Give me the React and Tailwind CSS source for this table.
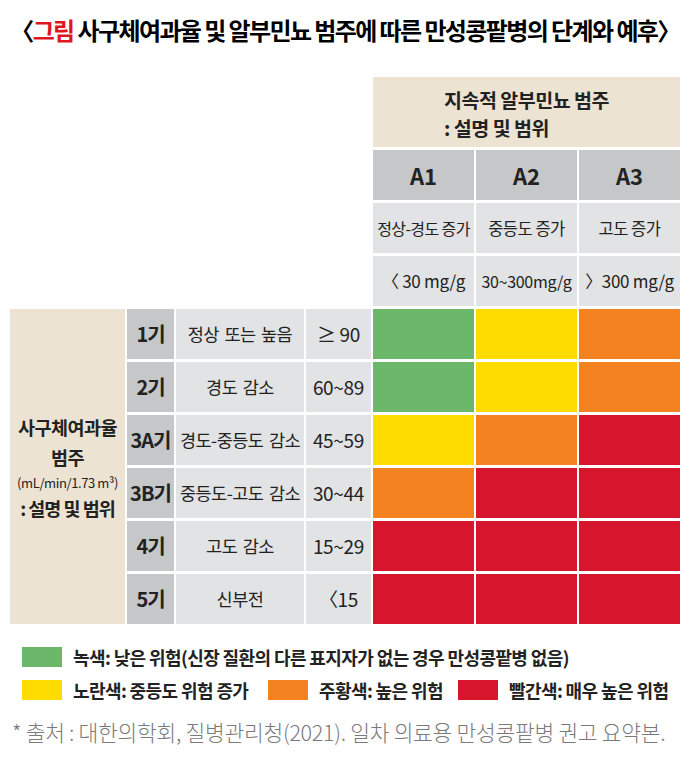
import React from "react";

const G = "bg-[#6cb86a]";
const Y = "bg-[#fedc00]";
const O = "bg-[#f58220]";
const R = "bg-[#d7162e]";

const rows = [
  { stage: "1기", desc: "정상 또는 높음", range: "≥ 90", colors: [G, Y, O] },
  { stage: "2기", desc: "경도 감소", range: "60~89", colors: [G, Y, O] },
  { stage: "3A기", desc: "경도-중등도 감소", range: "45~59", colors: [Y, O, R] },
  { stage: "3B기", desc: "중등도-고도 감소", range: "30~44", colors: [O, R, R] },
  { stage: "4기", desc: "고도 감소", range: "15~29", colors: [R, R, R] },
  { stage: "5기", desc: "신부전", range: "〈15", colors: [R, R, R] },
];

const Legend = ({ color, children }) => (
  <div className="flex items-center h-[20px]">
    <span className={`w-[40px] h-[20px] shrink-0 ${color}`}></span>
    <span className="ml-[11px] text-[18px] font-bold tracking-[-0.6px] text-[#222] whitespace-nowrap leading-[20px]">
      {children}
    </span>
  </div>
);

const App = () => {
  return (
    <div
      className="w-[690px] h-[765px] bg-white text-[#222] overflow-hidden"
      style={{ fontFamily: '"Noto Sans CJK KR", "Noto Sans", sans-serif' }}
    >
      {/* 제목 */}
      <h1 className="pt-[14px] h-[77px] text-center text-[24px] font-bold leading-[32px] tracking-[-1.6px] text-black whitespace-nowrap">
        〈<span className="text-[#e0161e]">그림</span> 사구체여과율 및 알부민뇨 범주에 따른 만성콩팥병의 단계와 예후〉
      </h1>

      {/* 알부민뇨 헤더 */}
      <div className="ml-[373px] w-[307px]">
        <div className="h-[70px] bg-[#ede3d3] flex items-center justify-center pt-[4px]">
          <div className="text-left text-[19.5px] font-bold leading-[28px] tracking-[-0.5px]">
            <div>지속적 알부민뇨 범주</div>
            <div>: 설명 및 범위</div>
          </div>
        </div>
        <div className="mt-[3px] grid grid-cols-3 gap-x-[2px] gap-y-[3px] auto-rows-[50px]">
          <div className="bg-[#c6c7c9] flex items-center justify-center text-[22px] font-bold">A1</div>
          <div className="bg-[#c6c7c9] flex items-center justify-center text-[22px] font-bold">A2</div>
          <div className="bg-[#c6c7c9] flex items-center justify-center text-[22px] font-bold">A3</div>
          <div className="bg-[#e1e3e5] flex items-center justify-center text-[16px] tracking-[-0.6px]">정상-경도 증가</div>
          <div className="bg-[#e1e3e5] flex items-center justify-center text-[16.5px] tracking-[-0.5px]">중등도 증가</div>
          <div className="bg-[#e1e3e5] flex items-center justify-center text-[16.5px] tracking-[-0.5px]">고도 증가</div>
          <div className="bg-[#e1e3e5] flex items-center justify-center text-[17px] tracking-[-0.3px] whitespace-nowrap">〈 30 mg/g</div>
          <div className="bg-[#e1e3e5] flex items-center justify-center text-[16px] tracking-[-0.3px] whitespace-nowrap">30~300mg/g</div>
          <div className="bg-[#e1e3e5] flex items-center justify-center text-[17px] tracking-[-0.3px] whitespace-nowrap">〉300 mg/g</div>
        </div>
      </div>

      {/* 본문 표 */}
      <div className="mt-[3px] ml-[10px] grid grid-cols-[115px_47px_128px_65px_101px_101px_101px] gap-x-[2px] gap-y-[3px] auto-rows-[50px]">
        <div className="row-span-6 bg-[#ede3d3] flex flex-col items-center justify-center text-center">
          <div className="text-[18.5px] font-bold leading-[30px] tracking-[-0.5px]">사구체여과율</div>
          <div className="text-[18.5px] font-bold leading-[30px] tracking-[-0.5px]">범주</div>
          <div className="text-[13px] leading-[22px] tracking-[-0.4px] whitespace-nowrap">(mL/min/1.73 m³)</div>
          <div className="text-[18.5px] font-bold leading-[28px] tracking-[-1px] whitespace-nowrap">: 설명 및 범위</div>
        </div>
        {rows.map((r) => (
          <React.Fragment key={r.stage}>
            <div className="bg-[#c6c7c9] flex items-center justify-center text-[20px] font-bold tracking-[-1px] whitespace-nowrap">{r.stage}</div>
            <div className="bg-[#e1e3e5] flex items-center justify-center text-[17.5px] tracking-[-0.5px] [word-spacing:2px] whitespace-nowrap">{r.desc}</div>
            <div className="bg-[#e1e3e5] flex items-center justify-center text-[19px] tracking-[-0.3px] whitespace-nowrap">{r.range}</div>
            {r.colors.map((c, i) => (
              <div key={i} className={c}></div>
            ))}
          </React.Fragment>
        ))}
      </div>

      {/* 범례 */}
      <div className="mt-[23px] ml-[22px]">
        <Legend color={G}>녹색: 낮은 위험(신장 질환의 다른 표지자가 없는 경우 만성콩팥병 없음)</Legend>
        <div className="mt-[13px] grid grid-cols-[246px_190px_auto]">
          <Legend color={Y}>노란색: 중등도 위험 증가</Legend>
          <Legend color={O}>주황색: 높은 위험</Legend>
          <Legend color={R}>빨간색: 매우 높은 위험</Legend>
        </div>
      </div>

      {/* 출처 */}
      <p className="mt-[20px] ml-[12px] text-[21.5px] font-light leading-[24px] tracking-[-0.3px] text-[#7a7a7a] whitespace-nowrap">
        * 출처 : 대한의학회, 질병관리청(2021). 일차 의료용 만성콩팥병 권고 요약본.
      </p>
    </div>
  );
};

export default App;
